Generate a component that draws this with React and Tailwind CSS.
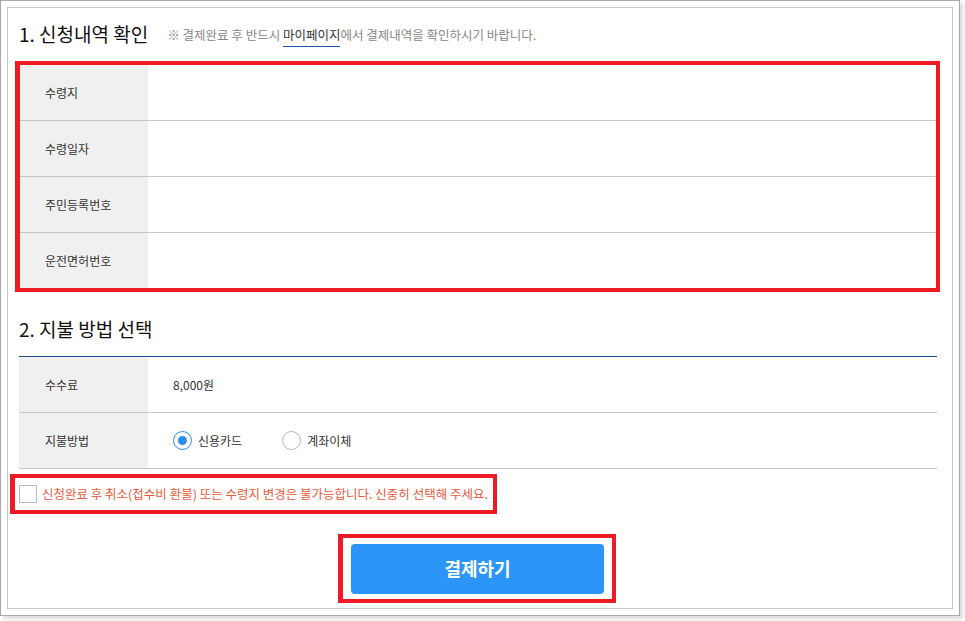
import React from "react";

const font = { fontFamily: '"Noto Sans CJK KR", "Noto Sans", sans-serif' };

function Row({ label, children, last }) {
  return (
    <div className={`flex ${last ? "h-[55px]" : "h-[56px] border-b border-[#c6c6c6]"}`}>
      <div className="w-[128px] shrink-0 bg-[#f0f0f0] flex items-center pl-[25px] text-[12px] text-[#333]">
        {label}
      </div>
      <div className="flex-1 flex items-center pl-[25px] text-[12px] text-[#333]">{children}</div>
    </div>
  );
}

export default function App() {
  return (
    <div className="w-[965px] h-[621px] bg-white" style={font}>
      <div className="w-[960px] h-[616px] border border-[#a9a9a9] p-[6px] bg-white shadow-[3px_3px_4px_rgba(0,0,0,0.14)]">
        <div className="h-full border border-[#c6c6c6] flex flex-col">
          {/* Section 1 title */}
          <div className="flex items-center h-[26px] mt-[13px] pl-[11px]">
            <span className="text-[19px] text-[#111] leading-[26px]">1. 신청내역 확인</span>
            <span className="ml-[19px] text-[12.5px] text-[#888] mt-[2px]">
              ※ 결제완료 후 반드시{" "}
              <span className="text-[#333] border-b border-[#1a56b0] pb-[2px]">마이페이지</span>
              에서 결제내역을 확인하시기 바랍니다.
            </span>
          </div>

          {/* Red box 1 */}
          <div className="ml-[7px] mt-[14px] w-[925px] border-4 border-l-[5px] border-[#ed1c24]">
            <Row label="수령지" />
            <Row label="수령일자" />
            <Row label="주민등록번호" />
            <Row label="운전면허번호" last />
          </div>

          {/* Section 2 title */}
          <div className="flex items-center h-[26px] mt-[24px] pl-[11px]">
            <span className="text-[19px] text-[#111] leading-[26px]">2. 지불 방법 선택</span>
          </div>

          <div className="ml-[11px] mt-[14px] w-[918px] border-t border-[#1c4a92]">
            <div className="flex h-[56px] border-b border-[#c6c6c6]">
              <div className="w-[129px] shrink-0 bg-[#f0f0f0] flex items-center pl-[26px] text-[12px] text-[#333]">
                수수료
              </div>
              <div className="flex-1 flex items-center pl-[25px] text-[12px] text-[#333]">8,000원</div>
            </div>
            <div className="flex h-[56px] border-b border-[#c6c6c6]">
              <div className="w-[129px] shrink-0 bg-[#f0f0f0] flex items-center pl-[26px] text-[12px] text-[#333]">
                지불방법
              </div>
              <div className="flex-1 flex items-center pl-[25px] text-[12px] text-[#333]">
                <span className="w-[19px] h-[19px] rounded-full border border-[#2b8ef0] flex items-center justify-center">
                  <span className="w-[9px] h-[9px] rounded-full bg-[#2b8ef0]" />
                </span>
                <span className="ml-[6px]">신용카드</span>
                <span className="ml-[40px] w-[19px] h-[19px] rounded-full border border-[#b5b5b5]" />
                <span className="ml-[6px]">계좌이체</span>
              </div>
            </div>
          </div>

          {/* Red box 2 */}
          <div className="ml-[2px] mt-[5px] w-[487px] h-[40px] border-4 border-l-[5px] border-[#ed1c24] flex items-center pl-[4px]">
            <span className="w-[18px] h-[18px] border border-[#bbb] bg-white shrink-0" />
            <span className="ml-[5px] text-[12.5px] text-[#ea5a3c] whitespace-nowrap">
              신청완료 후 취소(접수비 환불) 또는 수령지 변경은 불가능합니다. 신중히 선택해 주세요.
            </span>
          </div>

          {/* Red box 3 */}
          <div className="ml-[330px] mt-[20px] w-[278px] h-[69px] border-4 border-l-[5px] border-[#ed1c24] flex items-center justify-center">
            <button className="w-[253px] h-[50px] rounded-[4px] bg-[#2b96f7] text-white text-[18px] font-bold">
              결제하기
            </button>
          </div>
        </div>
      </div>
    </div>
  );
}
